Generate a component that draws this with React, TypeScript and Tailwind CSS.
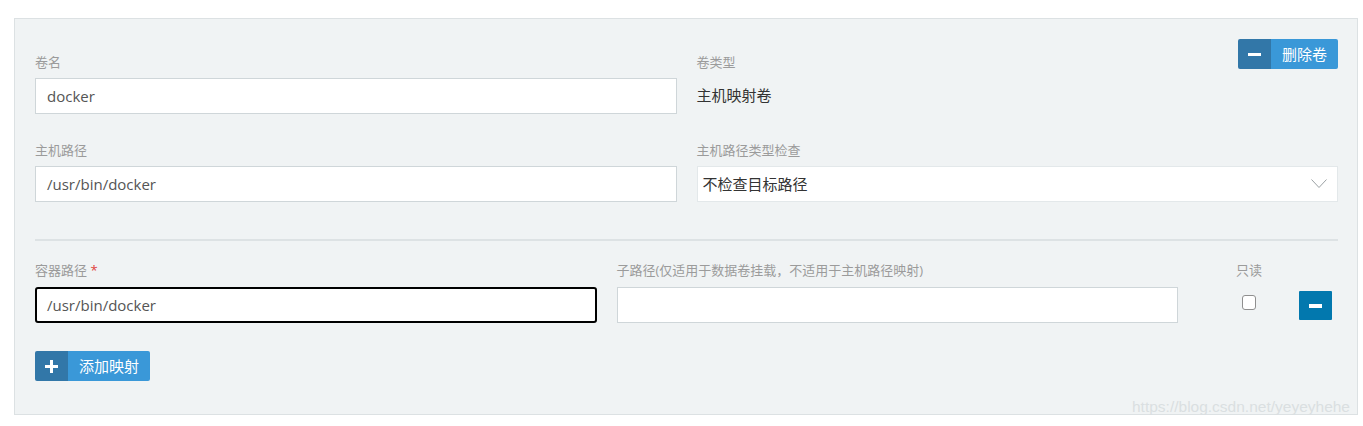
import React from "react";

const Label = ({ children }: { children: React.ReactNode }) => (
  <div className="text-[13px] leading-[18px] text-[#9b9b9b]">{children}</div>
);

const TextInput = ({ value, focused = false }: { value: string; focused?: boolean }) => (
  <div
    className={`h-9 flex items-center bg-white text-[15px] text-[#555] ${
      focused ? "border-2 border-black rounded-[3px] pl-[10px]" : "border border-[#cfd6d9] pl-[11px]"
    }`}
  >
    {value}
  </div>
);

const MinusIcon = () => <span className="block w-[13px] h-[3px] bg-white" />;

const PlusIcon = () => (
  <span className="relative block w-[13px] h-[13px]">
    <span className="absolute left-0 top-[5px] w-[13px] h-[3px] bg-white" />
    <span className="absolute top-0 left-[5px] w-[3px] h-[13px] bg-white" />
  </span>
);

const SplitButton = ({ icon, label }: { icon: React.ReactNode; label: string }) => (
  <button className="flex h-[30px] rounded-[2px] overflow-hidden text-white text-[15px]">
    <span className="w-[33px] h-full flex items-center justify-center bg-[#3277a8]">{icon}</span>
    <span className="h-full flex items-center px-[11px] bg-[#3a98d8]">{label}</span>
  </button>
);

export default function App() {
  return (
    <div
      className="relative bg-white min-h-[426px] pt-[18px] pl-[14px] pr-[5px]"
      style={{ fontFamily: '"Open Sans", "Noto Sans CJK SC", sans-serif' }}
    >
      <div className="border border-[#dce1e3] bg-[#f0f3f4] pl-5 pr-[19px] pt-5 pb-[33px]">
        {/* volume info */}
        <div className="grid grid-cols-2 gap-x-5">
          <div className="pt-[14px]">
            <Label>卷名</Label>
            <div className="mt-[7px]">
              <TextInput value="docker" />
            </div>
          </div>
          <div className="flex justify-between items-start">
            <div className="pt-[14px]">
              <Label>卷类型</Label>
              <div className="mt-[14px] text-[15px] leading-5 text-[#333]">主机映射卷</div>
            </div>
            <SplitButton icon={<MinusIcon />} label="删除卷" />
          </div>

          <div className="pt-[27px]">
            <Label>主机路径</Label>
            <div className="mt-[7px]">
              <TextInput value="/usr/bin/docker" />
            </div>
          </div>
          <div className="pt-[27px]">
            <Label>主机路径类型检查</Label>
            <div className="mt-[7px] h-9 flex items-center justify-between bg-white border border-[#e3e8ea] pl-[5px] pr-[10px] text-[15px] text-[#333]">
              <span>不检查目标路径</span>
              <svg width="16" height="10" viewBox="0 0 16 10" fill="none">
                <polyline points="0.5,0.5 8,8.5 15.5,0.5" stroke="#9aa0a3" strokeWidth="1" />
              </svg>
            </div>
          </div>
        </div>

        <div className="mt-[37px] h-[2px] bg-[#dde2e4]" />

        {/* mappings */}
        <div className="mt-5 flex gap-5">
          <div className="flex-1">
            <Label>
              容器路径 <span className="text-[#e0413b]">*</span>
            </Label>
            <div className="mt-2">
              <TextInput value="/usr/bin/docker" focused />
            </div>
          </div>
          <div className="flex-1">
            <Label>子路径(仅适用于数据卷挂载，不适用于主机路径映射)</Label>
            <div className="mt-2">
              <TextInput value="" />
            </div>
          </div>
          <div className="w-[140px] flex">
            <div className="ml-[38px] flex flex-col items-center">
              <Label>只读</Label>
              <span className="mt-4 block w-[14px] h-[15px] bg-white border border-[#8f8f8f] rounded-[3px]" />
            </div>
            <button className="ml-[37px] mt-[30px] w-[33px] h-[29px] flex items-center justify-center bg-[#0278ae] rounded-[1px]">
              <span className="block w-[13px] h-[4px] bg-white" />
            </button>
          </div>
        </div>

        <div className="mt-7 flex">
          <SplitButton icon={<PlusIcon />} label="添加映射" />
        </div>
      </div>

      <div
        className="absolute right-[13px] bottom-[8px] text-[15.5px] text-[#dadfe1]"
        style={{ fontFamily: '"Liberation Sans", Arial, sans-serif' }}
      >
        https://blog.csdn.net/yeyeyhehe
      </div>
    </div>
  );
}
